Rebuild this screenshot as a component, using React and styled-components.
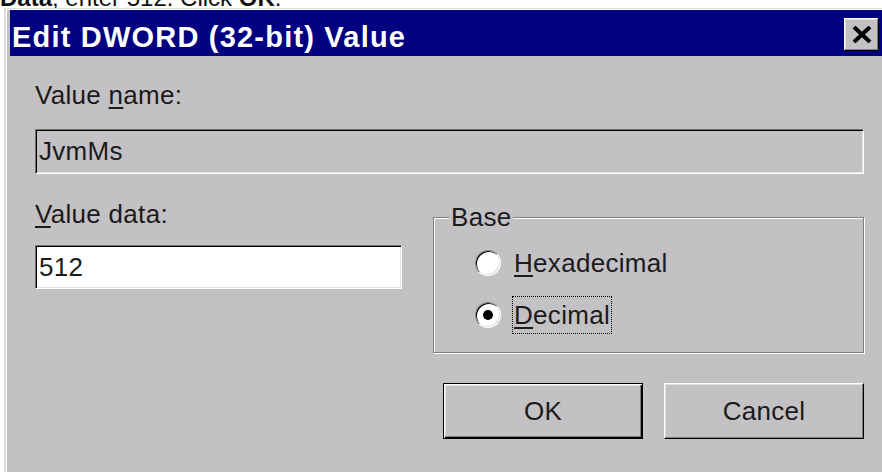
import styled, { createGlobalStyle, css } from "styled-components";

const GlobalStyle = createGlobalStyle`
  html, body {
    margin: 0;
    padding: 0;
    background: #fff;
    overflow: hidden;
  }
  body {
    font-family: "Liberation Sans", Arial, sans-serif;
  }
`;

const face = "#c3c1c4";
const ink = "#1b1b1b";

const Page = styled.div`
  width: 882px;
  height: 472px;
  overflow: hidden;
  background: #fff;
`;

/* last line of the help text, mostly scrolled out above the dialog */
const Instruction = styled.p`
  margin: 0;
  height: 8px;
  display: flex;
  align-items: flex-end;
  overflow: hidden;
  white-space: nowrap;
  font-size: 24px;
  line-height: 24px;
  color: #111;

  span {
    margin-bottom: -2px;
  }
`;

const Window = styled.div`
  box-sizing: border-box;
  margin-left: 4px;
  width: 884px;
  height: 464px;
  background: ${face};
  border-top: 1px solid #dcdcdc;
  border-left: 2px solid #dcdcdc;
  box-shadow: inset 1px 1px #fff;
  padding: 1px 0 0 4px;
  display: flex;
  flex-direction: column;
`;

const TitleBar = styled.div`
  flex: none;
  box-sizing: border-box;
  height: 46px;
  padding: 0 9px 0 2px;
  background: #000080;
  display: flex;
  align-items: center;
  justify-content: space-between;
`;

const Title = styled.h1`
  margin: 7px 0 0;
  font-size: 29px;
  line-height: 36px;
  font-weight: 700;
  letter-spacing: 1.2px;
  color: #fff;
  white-space: nowrap;
`;

const CloseButton = styled.button`
  width: 35px;
  height: 33px;
  padding: 0;
  margin-top: 2px;
  border: none;
  background: ${face};
  box-shadow: inset -1px -1px #000, inset 1px 1px #fff, inset -2px -2px #808080,
    inset 2px 2px #dfdfdf;
  display: flex;
  align-items: center;
  justify-content: center;
`;

const Body = styled.div`
  flex: 1;
  padding: 24px 24px 0 25px;
  display: grid;
  grid-template-columns: 367px 431px;
  column-gap: 31px;
  align-content: start;
`;

const NameRow = styled.div`
  grid-column: 1 / -1;
  display: flex;
  flex-direction: column;
  gap: 19px;
`;

const DataColumn = styled.div`
  margin-top: 25px;
  display: flex;
  flex-direction: column;
  gap: 16px;
`;

const SideColumn = styled.div`
  margin-top: 43px;
  display: flex;
  flex-direction: column;
  gap: 30px;
`;

const FieldLabel = styled.label`
  display: block;
  font-size: 26px;
  line-height: 30px;
  letter-spacing: 0.3px;
  color: ${ink};
`;

const Key = styled.span`
  text-decoration: underline;
  text-decoration-thickness: 2px;
  text-underline-offset: 3px;
`;

const TextBox = styled.input`
  display: block;
  box-sizing: border-box;
  width: 100%;
  height: ${(p) => p.$height}px;
  margin: 0;
  padding: 0 3px;
  font: 26px "Liberation Sans", Arial, sans-serif;
  letter-spacing: 0.3px;
  color: ${ink};
  background: ${(p) => (p.readOnly ? face : "#fff")};
  border: 1px solid;
  border-color: #6f6f6f #fff #fff #6f6f6f;
  box-shadow: inset 1px 1px #000, inset -1px -1px #e4e4e4;
  outline: none;
`;

const Group = styled.div`
  position: relative;
  box-sizing: border-box;
  height: 136px;
  padding: 26px 0 0 41px;
  border: 1px solid #808080;
  box-shadow: inset 1px 1px #fff, 1px 1px #fff;
  display: flex;
  flex-direction: column;
  gap: 14px;
`;

const GroupCaption = styled.span`
  position: absolute;
  top: -16px;
  left: 15px;
  padding: 0 2px;
  background: ${face};
  font-size: 26px;
  line-height: 30px;
  letter-spacing: 0.3px;
  color: ${ink};
`;

const Option = styled.label`
  display: flex;
  align-items: center;
  gap: 11px;
  height: 38px;
  font-size: 26px;
  letter-spacing: 0.3px;
  color: ${ink};
`;

const RadioDot = styled.span`
  position: relative;
  flex: none;
  box-sizing: border-box;
  width: 26px;
  height: 26px;
  border-radius: 50%;
  background: #fff;
  border: 1px solid;
  border-color: #808080 #fff #fff #808080;
  box-shadow: inset 1px 1px #000, inset -1px -1px #dfdfdf;

  ${(p) =>
    p.$checked &&
    css`
      &::after {
        content: "";
        position: absolute;
        left: 7px;
        top: 7px;
        width: 10px;
        height: 10px;
        border-radius: 50%;
        background: #000;
      }
    `}
`;

const OptionText = styled.span`
  padding: 0 1px;
  line-height: 36px;
  border: 1px dotted ${(p) => (p.$focused ? "#000" : "transparent")};
`;

const ButtonRow = styled.div`
  display: flex;
  justify-content: flex-end;
  gap: 21px;
`;

const Button = styled.button`
  box-sizing: border-box;
  width: 200px;
  height: 56px;
  padding: 0;
  font: 26px "Liberation Sans", Arial, sans-serif;
  letter-spacing: 0.3px;
  color: ${ink};
  background: ${face};
  border: 1px solid;
  border-color: #fff #000 #000 #fff;
  box-shadow: inset -1px -1px #808080, inset 1px 1px #dfdfdf;

  ${(p) =>
    p.$default &&
    css`
      border-color: #000;
      box-shadow: inset 1px 1px #fff, inset -1px -1px #000,
        inset -2px -2px #808080, inset 2px 2px #dfdfdf;
    `}
`;

const CloseGlyph = () => (
  <svg width="20" height="17" viewBox="0 0 20 17">
    <path d="M2 1 L18 16 M18 1 L2 16" stroke="#000" strokeWidth="4" />
  </svg>
);

const RadioOption = ({ label, accessKey, checked, focused }) => (
  <Option>
    <RadioDot $checked={checked} />
    <OptionText $focused={focused}>
      <Key>{accessKey}</Key>
      {label}
    </OptionText>
  </Option>
);

export default function App() {
  return (
    <Page>
      <GlobalStyle />
      <Instruction>
        <span>
          <b>Data</b>, enter 512. Click <b>OK</b>.
        </span>
      </Instruction>
      <Window>
        <TitleBar>
          <Title>Edit DWORD (32-bit) Value</Title>
          <CloseButton aria-label="Close">
            <CloseGlyph />
          </CloseButton>
        </TitleBar>
        <Body>
          <NameRow>
            <FieldLabel>
              Value <Key>n</Key>ame:
            </FieldLabel>
            <TextBox $height={45} readOnly value="JvmMs" />
          </NameRow>
          <DataColumn>
            <FieldLabel>
              <Key>V</Key>alue data:
            </FieldLabel>
            <TextBox $height={44} defaultValue="512" />
          </DataColumn>
          <SideColumn>
            <Group>
              <GroupCaption>Base</GroupCaption>
              <RadioOption accessKey="H" label="exadecimal" />
              <RadioOption accessKey="D" label="ecimal" checked focused />
            </Group>
            <ButtonRow>
              <Button $default>OK</Button>
              <Button>Cancel</Button>
            </ButtonRow>
          </SideColumn>
        </Body>
      </Window>
    </Page>
  );
}
